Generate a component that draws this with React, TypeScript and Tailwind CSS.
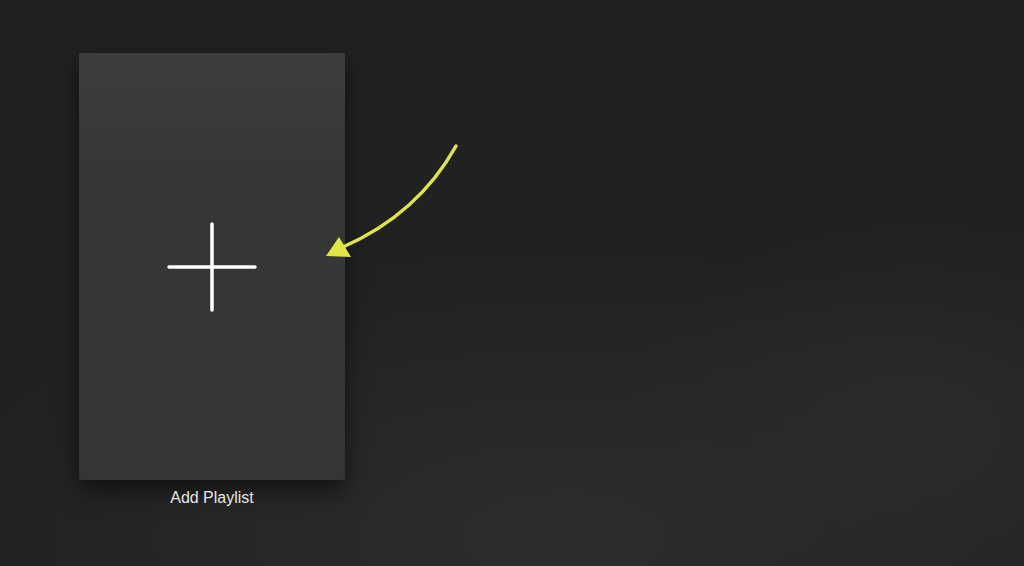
import React from "react";

export default function App() {
  return (
    <div
      className="relative w-[1024px] h-[566px] overflow-hidden bg-[#212122]"
      style={{ fontFamily: '"Liberation Sans", Arial, sans-serif' }}
    >
      <div className="absolute inset-0 bg-[radial-gradient(ellipse_60%_50%_at_55%_95%,#2d2d2d_0%,rgba(33,33,34,0)_100%)]" />
      <div className="absolute inset-0 bg-[radial-gradient(ellipse_30%_35%_at_90%_75%,#2b2b2b_0%,rgba(33,33,34,0)_100%)]" />
      <div className="relative flex flex-col items-start pl-[79px] pt-[53px]">
        <div className="flex flex-col items-center">
          <div className="w-[266px] h-[427px] rounded-[2px] bg-[linear-gradient(180deg,#3d3d3d_0%,#373737_25%,#353535_100%)] shadow-[0_10px_24px_rgba(0,0,0,0.55)] flex items-center justify-center">
            <svg width="90" height="90" viewBox="0 0 90 90">
              <line x1="2" y1="45" x2="88" y2="45" stroke="#ffffff" strokeWidth="3.5" strokeLinecap="round" />
              <line x1="45" y1="2" x2="45" y2="88" stroke="#ffffff" strokeWidth="3.5" strokeLinecap="round" />
            </svg>
          </div>
          <div className="mt-[8px] text-[16px] leading-[20px] text-[#e6e6e6]">Add Playlist</div>
        </div>
      </div>
      <svg className="absolute left-0 top-0" width="1024" height="566" viewBox="0 0 1024 566">
        <path d="M456 146 Q 418 214 343 247" fill="none" stroke="#e0e644" strokeWidth="3.5" strokeLinecap="round" />
        <polygon points="326,256 339,237 351,257" fill="#e0e644" />
      </svg>
    </div>
  );
}
